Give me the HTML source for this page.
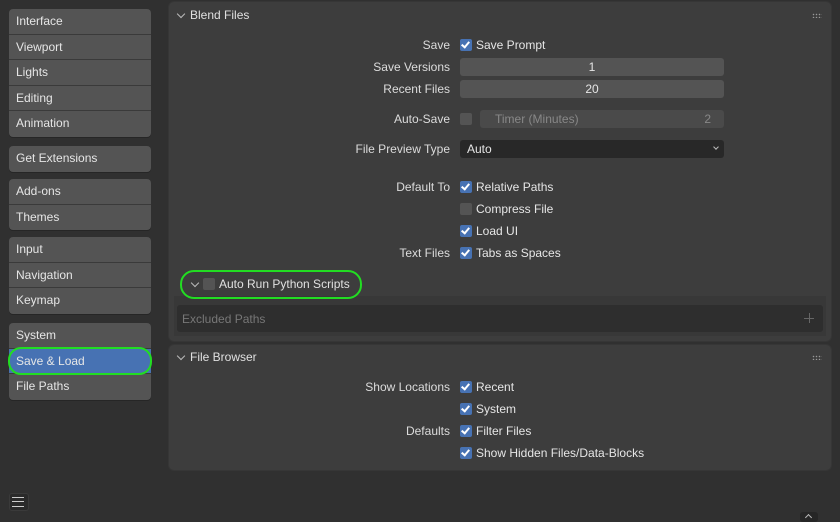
<!DOCTYPE html><html><head><style>
body{margin:0;width:840px;height:520px;background:#303030;font-family:"Liberation Sans",sans-serif;font-size:12px;color:#e0e0e0;position:relative;overflow:hidden}
.a{position:absolute}
.grp{position:absolute;left:9px;width:142px;background:#545454;border-radius:4px;overflow:hidden;box-shadow:0 1px 0 #262626}
.grp div{height:25.6px;line-height:25px;padding-left:7px;border-bottom:1px solid #3a3a3a;box-sizing:border-box;color:#e6e6e6}
.grp div:last-child{border-bottom:none}
.panel{position:absolute;left:169px;width:662px;background:#3d3d3d;border-radius:5px;box-shadow:0 0 0 1px #363636}
.lbl{position:absolute;right:390px;text-align:right;color:#dcdcdc}
.cb{position:absolute;left:460px;width:12px;height:12px;border-radius:2px;background:#545454;margin-top:1px}
.cb.on{background:#4772b3}
.cb.on:after{content:"";position:absolute;left:3px;top:1px;width:3px;height:6px;border:solid #fff;border-width:0 2px 2px 0;transform:rotate(40deg)}
.ct{position:absolute;left:476px;color:#e6e6e6}
.fld{position:absolute;left:460px;width:264px;height:18px;background:#545454;border-radius:3px;text-align:center;line-height:18px;color:#e6e6e6}
.chev{position:absolute;width:5px;height:5px;border:solid #bbb;border-width:0 1px 1px 0;transform:rotate(45deg)}
.dots{position:absolute;width:10px;height:5px;background:radial-gradient(circle,#999 0.6px,transparent 0.9px) 0 0/3px 3px}
</style></head><body>
<div class="grp" style="top:9px"><div>Interface</div><div>Viewport</div><div>Lights</div><div>Editing</div><div>Animation</div></div>
<div class="grp" style="top:146px"><div>Get Extensions</div></div>
<div class="grp" style="top:179px"><div>Add-ons</div><div>Themes</div></div>
<div class="grp" style="top:237px"><div>Input</div><div>Navigation</div><div>Keymap</div></div>
<div class="grp" style="top:323px"><div>System</div><div style="background:#4772b3">Save &amp; Load</div><div>File Paths</div></div>
<div class="a" style="left:8px;top:347px;width:140px;height:24px;border:2px solid #22dd22;border-radius:13px"></div>
<div class="a" style="left:9px;top:493px;width:18px;height:16px;border-radius:3px;background:#2a2a2a;border:1px solid #3a3a3a"></div>
<div class="a" style="left:12px;top:497px;width:12px;height:8px;border-top:1px solid #ccc;border-bottom:1px solid #ccc"></div>
<div class="a" style="left:12px;top:501px;width:12px;height:1px;background:#ccc"></div>

<div class="panel" style="top:2px;height:339px"></div>
<div class="chev" style="left:178px;top:11px"></div>
<div class="a" style="left:190px;top:8px">Blend Files</div>
<div class="dots" style="left:812px;top:13px"></div>

<div class="lbl" style="top:38px">Save</div><div class="cb on" style="top:38px"></div><div class="ct" style="top:38px">Save Prompt</div>
<div class="lbl" style="top:60px">Save Versions</div><div class="fld" style="top:58px">1</div>
<div class="lbl" style="top:82px">Recent Files</div><div class="fld" style="top:80px">20</div>
<div class="lbl" style="top:112px">Auto-Save</div><div class="cb" style="top:112px"></div>
<div class="fld" style="left:480px;width:244px;top:110px;background:#4a4a4a;color:#888;text-align:left"><span style="margin-left:15px">Timer (Minutes)</span><span style="position:absolute;right:13px">2</span></div>
<div class="lbl" style="top:142px">File Preview Type</div>
<div class="fld" style="top:140px;background:#282828;text-align:left"><span style="margin-left:7px">Auto</span></div>
<div class="chev" style="left:714px;top:145px;width:3px;height:3px"></div>
<div class="lbl" style="top:180px">Default To</div><div class="cb on" style="top:180px"></div><div class="ct" style="top:180px">Relative Paths</div>
<div class="cb" style="top:202px"></div><div class="ct" style="top:202px">Compress File</div>
<div class="cb on" style="top:224px"></div><div class="ct" style="top:224px">Load UI</div>
<div class="lbl" style="top:246px">Text Files</div><div class="cb on" style="top:246px"></div><div class="ct" style="top:246px">Tabs as Spaces</div>

<div class="a" style="left:174px;top:296px;width:652px;height:40px;background:#383838"></div>
<div class="a" style="left:177px;top:305px;width:646px;height:27px;background:#2e2e2e;border-radius:3px"></div>
<div class="a" style="left:182px;top:312px;color:#777">Excluded Paths</div>
<div class="a" style="left:804px;top:318px;width:10px;height:1px;background:#666"></div>
<div class="a" style="left:809px;top:313px;width:1px;height:10px;background:#666"></div>
<div class="chev" style="left:192px;top:280px"></div>
<div class="cb" style="left:203px;top:277px"></div>
<div class="a" style="left:219px;top:277px">Auto Run Python Scripts</div>
<div class="a" style="left:180px;top:270px;width:178px;height:25px;border:2px solid #22dd22;border-radius:14px"></div>

<div class="panel" style="top:345px;height:125px"></div>
<div class="chev" style="left:178px;top:353px"></div>
<div class="a" style="left:190px;top:350px">File Browser</div>
<div class="dots" style="left:812px;top:355px"></div>
<div class="lbl" style="top:380px">Show Locations</div><div class="cb on" style="top:380px"></div><div class="ct" style="top:380px">Recent</div>
<div class="cb on" style="top:402px"></div><div class="ct" style="top:402px">System</div>
<div class="lbl" style="top:424px">Defaults</div><div class="cb on" style="top:424px"></div><div class="ct" style="top:424px">Filter Files</div>
<div class="cb on" style="top:446px"></div><div class="ct" style="top:446px">Show Hidden Files/Data-Blocks</div>
<div class="a" style="left:800px;top:512px;width:18px;height:10px;background:#262626;border-radius:3px"></div>
<div class="chev" style="left:806px;top:515px;transform:rotate(225deg);width:4px;height:4px"></div>
</body></html>
